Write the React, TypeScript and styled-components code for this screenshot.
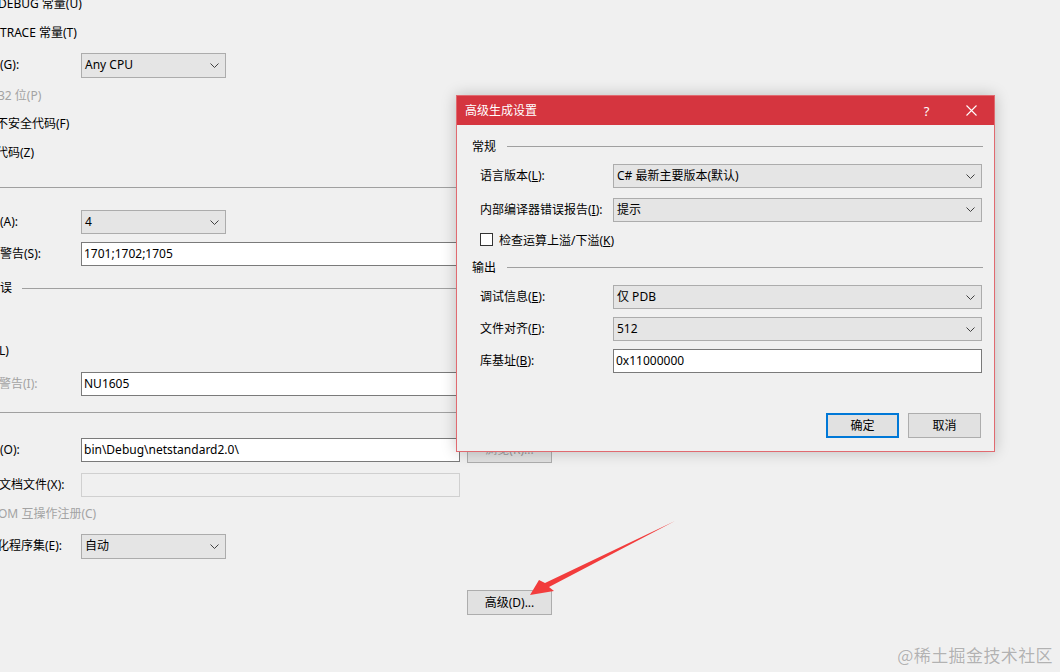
import React from 'react';
import styled, { createGlobalStyle } from 'styled-components';

const Global = createGlobalStyle`
  html, body { margin: 0; padding: 0; background: #f0f0f0; }
  body {
    font-family: "Noto Sans", "Noto Sans CJK SC", sans-serif;
    font-size: 12px;
    color: #000;
  }
  #root { width: 1060px; height: 672px; }
`;

const Page = styled.div`
  position: relative;
  width: 1060px;
  height: 672px;
  overflow: hidden;
  background: #f0f0f0;
`;

const Form = styled.div`
  display: flex;
  flex-direction: column;
  margin-top: -11px;
  width: 552px;
`;

const Row = styled.div<{ $h: number; $mt?: number }>`
  display: flex;
  align-items: center;
  flex-shrink: 0;
  height: ${(p) => p.$h}px;
  margin-top: ${(p) => p.$mt ?? 0}px;
`;

const Label = styled.span<{ $shift?: number; $dim?: boolean; $w?: number }>`
  display: inline-block;
  white-space: nowrap;
  line-height: 16px;
  margin-left: ${(p) => p.$shift ?? 0}px;
  width: ${(p) => (p.$w ? `${p.$w - (p.$shift ?? 0)}px` : 'auto')};
  color: ${(p) => (p.$dim ? '#a3a3a3' : '#000')};
  flex-shrink: 0;
`;

const Select = styled.div<{ $w?: number; $h?: number }>`
  box-sizing: border-box;
  width: ${(p) => (p.$w ? `${p.$w}px` : 'auto')};
  flex: ${(p) => (p.$w ? '0 0 auto' : '1 1 auto')};
  height: ${(p) => p.$h ?? 25}px;
  background: #e5e5e5;
  border: 1px solid #acacac;
  display: flex;
  align-items: center;
  justify-content: space-between;
  padding: 0 6px 0 3px;
  line-height: 16px;
  white-space: nowrap;
`;

const TextBox = styled.div<{ $w?: number; $disabled?: boolean }>`
  box-sizing: border-box;
  width: ${(p) => (p.$w ? `${p.$w}px` : 'auto')};
  flex: ${(p) => (p.$w ? '0 0 auto' : '1 1 auto')};
  height: 24px;
  background: ${(p) => (p.$disabled ? '#f0f0f0' : '#fff')};
  border: 1px solid ${(p) => (p.$disabled ? '#d0d0d0' : '#7a7a7a')};
  display: flex;
  align-items: center;
  padding-left: 2px;
  line-height: 16px;
  white-space: nowrap;
`;

const Rule = styled.div<{ $indent?: number }>`
  flex: 1 1 auto;
  height: 1px;
  background: #a0a0a0;
  margin-left: ${(p) => p.$indent ?? 0}px;
`;

const PushButton = styled.div<{ $w: number; $default?: boolean; $ml?: number }>`
  box-sizing: border-box;
  width: ${(p) => p.$w}px;
  height: 25px;
  margin-left: ${(p) => p.$ml ?? 0}px;
  background: #e1e1e1;
  border: ${(p) => (p.$default ? '2px solid #0078d7' : '1px solid #adadad')};
  display: flex;
  align-items: center;
  justify-content: center;
  line-height: 16px;
  flex-shrink: 0;
  white-space: nowrap;
`;

const GhostButton = styled(PushButton)`
  color: #9a9a9a;
`;

/* ---------- dialog ---------- */

const Dialog = styled.div`
  position: absolute;
  left: 456px;
  top: 95px;
  width: 539px;
  height: 357px;
  box-sizing: border-box;
  border: 1px solid #e06a70;
  background: #f0f0f0;
  box-shadow: 0 0 14px rgba(0, 0, 0, 0.22);
  display: flex;
  flex-direction: column;
`;

const TitleBar = styled.div`
  height: 29px;
  flex-shrink: 0;
  background: #d5353f;
  color: #fff;
  display: flex;
  align-items: center;
  padding-left: 8px;
`;

const TitleText = styled.span`
  flex: 1 1 auto;
  line-height: 16px;
  font-size: 12px;
`;

const TitleButton = styled.div`
  width: 45px;
  height: 29px;
  display: flex;
  align-items: center;
  justify-content: center;
  color: #fff;
  font-size: 13px;
  font-family: "Noto Sans", sans-serif;
`;

const Body = styled.div`
  display: flex;
  flex-direction: column;
  padding: 9px 11px 0 15px;
`;

const GroupHeader = styled.div<{ $h: number }>`
  display: flex;
  align-items: center;
  gap: 11px;
  height: ${(p) => p.$h}px;
  line-height: 16px;
`;

const Field = styled.div<{ $h: number }>`
  display: flex;
  align-items: center;
  height: ${(p) => p.$h}px;
  padding-left: 8px;
  padding-right: 1px;
`;

const FieldLabel = styled.span`
  width: 133px;
  flex-shrink: 0;
  line-height: 16px;
  white-space: nowrap;
`;

const CheckBox = styled.span`
  box-sizing: border-box;
  width: 13px;
  height: 13px;
  border: 1px solid #333;
  background: #fff;
  margin-right: 6px;
  flex-shrink: 0;
`;

const ButtonRow = styled.div`
  display: flex;
  justify-content: flex-end;
  gap: 9px;
  margin-top: 37px;
  padding-right: 2px;
`;

const Watermark = styled.div`
  position: absolute;
  right: 7px;
  top: 644px;
  font-size: 17px;
  line-height: 22px;
  color: #b2b2b2;
  font-family: "Noto Sans CJK SC", sans-serif;
  text-shadow: 0 0 1px #fff;
  letter-spacing: 0.4px;
`;

const Overlay = styled.svg`
  position: absolute;
  left: 0;
  top: 0;
  pointer-events: none;
`;

const Chevron = () => (
  <svg width="9" height="5" viewBox="0 0 9 5" style={{ flexShrink: 0 }}>
    <path d="M0.5 0.5 L4.5 4.5 L8.5 0.5" fill="none" stroke="#404040" strokeWidth="1" />
  </svg>
);

const CloseIcon = () => (
  <svg width="11" height="11" viewBox="0 0 11 11">
    <path d="M0.5 0.5 L10.5 10.5 M10.5 0.5 L0.5 10.5" stroke="#fff" strokeWidth="1.1" />
  </svg>
);

export default function App() {
  return (
    <Page>
      <Global />
      <Form>
        <Row $h={30}>
          <Label $shift={-2}>DEBUG 常量(U)</Label>
        </Row>
        <Row $h={28}>
          <Label>TRACE 常量(T)</Label>
        </Row>
        <Row $h={36}>
          <Label $w={81}>(G):</Label>
          <Select $w={145}>
            <span>Any CPU</span>
            <Chevron />
          </Select>
        </Row>
        <Row $h={26}>
          <Label $shift={-2} $dim>32 位(P)</Label>
        </Row>
        <Row $h={30}>
          <Label $shift={-4}>不安全代码(F)</Label>
        </Row>
        <Row $h={28}>
          <Label $shift={-4}>代码(Z)</Label>
        </Row>
        <Row $h={40}>
          <Rule />
        </Row>
        <Row $h={30}>
          <Label $w={81}>(A):</Label>
          <Select $w={145} $h={24}>
            <span>4</span>
            <Chevron />
          </Select>
        </Row>
        <Row $h={34}>
          <Label $w={81}>警告(S):</Label>
          <TextBox $w={379}>1701;1702;1705</TextBox>
        </Row>
        <Row $h={34}>
          <Label>误</Label>
          <Rule $indent={10} />
        </Row>
        <Row $h={32} />
        <Row $h={28}>
          <Label $shift={-1}>L)</Label>
        </Row>
        <Row $h={38}>
          <Label $w={81} $shift={-1} $dim>警告(I):</Label>
          <TextBox $w={379}>NU1605</TextBox>
        </Row>
        <Row $h={18}>
          <Rule />
        </Row>
        <Row $h={34} $mt={12}>
          <Label $w={81}>(O):</Label>
          <TextBox $w={379}>bin\Debug\netstandard2.0\</TextBox>
          <GhostButton $w={85} $ml={7}>浏览(R)...</GhostButton>
        </Row>
        <Row $h={36}>
          <Label $w={81} $shift={-1}>文档文件(X):</Label>
          <TextBox $w={379} $disabled />
        </Row>
        <Row $h={22}>
          <Label $shift={-2} $dim>OM 互操作注册(C)</Label>
        </Row>
        <Row $h={42}>
          <Label $w={81} $shift={-3}>化程序集(E):</Label>
          <Select $w={145}>
            <span>自动</span>
            <Chevron />
          </Select>
        </Row>
        <Row $h={25} $mt={23}>
          <PushButton $w={85} $ml={467}>高级(D)...</PushButton>
        </Row>
      </Form>

      <Dialog>
        <TitleBar>
          <TitleText>高级生成设置</TitleText>
          <TitleButton>?</TitleButton>
          <TitleButton>
            <CloseIcon />
          </TitleButton>
        </TitleBar>
        <Body>
          <GroupHeader $h={25}>
            <span>常规</span>
            <Rule />
          </GroupHeader>
          <Field $h={34}>
            <FieldLabel>
              语言版本(<u>L</u>):
            </FieldLabel>
            <Select $h={24}>
              <span>C# 最新主要版本(默认)</span>
              <Chevron />
            </Select>
          </Field>
          <Field $h={33}>
            <FieldLabel>
              内部编译器错误报告(<u>I</u>):
            </FieldLabel>
            <Select $h={24}>
              <span>提示</span>
              <Chevron />
            </Select>
          </Field>
          <Field $h={27}>
            <CheckBox />
            <span>
              检查运算上溢/下溢(<u>K</u>)
            </span>
          </Field>
          <GroupHeader $h={29}>
            <span>输出</span>
            <Rule />
          </GroupHeader>
          <Field $h={30}>
            <FieldLabel>
              调试信息(<u>E</u>):
            </FieldLabel>
            <Select $h={24}>
              <span>仅 PDB</span>
              <Chevron />
            </Select>
          </Field>
          <Field $h={34}>
            <FieldLabel>
              文件对齐(<u>F</u>):
            </FieldLabel>
            <Select $h={24}>
              <span>512</span>
              <Chevron />
            </Select>
          </Field>
          <Field $h={30}>
            <FieldLabel>
              库基址(<u>B</u>):
            </FieldLabel>
            <TextBox>0x11000000</TextBox>
          </Field>
          <ButtonRow>
            <PushButton $w={73} $default>
              确定
            </PushButton>
            <PushButton $w={73}>取消</PushButton>
          </ButtonRow>
        </Body>
      </Dialog>

      <Overlay width="1060" height="672" viewBox="0 0 1060 672">
        <polygon
          points="675,521 549,587 554,591 530,595 539,580 545,583"
          fill="#f23c3c"
        />
      </Overlay>

      <Watermark>@稀土掘金技术社区</Watermark>
    </Page>
  );
}
